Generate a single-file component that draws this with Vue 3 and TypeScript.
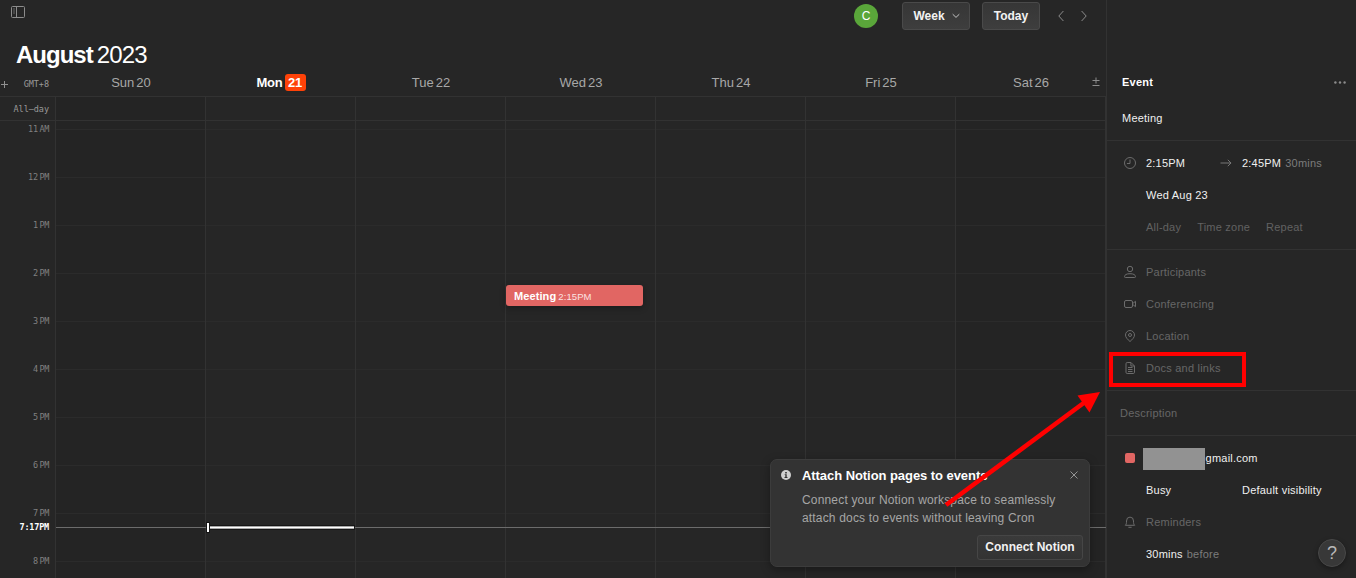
<script setup lang="ts">
interface Day { name: string; date: number; today?: boolean; weekend?: boolean }

const days: Day[] = [
  { name: 'Sun', date: 20, weekend: true },
  { name: 'Mon', date: 21, today: true },
  { name: 'Tue', date: 22 },
  { name: 'Wed', date: 23 },
  { name: 'Thu', date: 24 },
  { name: 'Fri', date: 25 },
  { name: 'Sat', date: 26, weekend: true },
]

const hours: [string, string][] = [
  ['11', 'AM'], ['12', 'PM'], ['1', 'PM'], ['2', 'PM'], ['3', 'PM'],
  ['4', 'PM'], ['5', 'PM'], ['6', 'PM'], ['7', 'PM'], ['8', 'PM'],
]
</script>

<template>
  <div class="app">
    <main class="calendar">
      <header class="toolbar">
        <svg class="panel-icon" width="14" height="12" viewBox="0 0 14 12" fill="none" stroke="#8c8c8c">
          <rect x=".5" y=".5" width="13" height="11" rx="1" />
          <path d="M5.5 .5V11.5" />
          <path d="M2 3h2M2 5h2M2 7h2" stroke="#666" />
        </svg>
        <div class="avatar">C</div>
        <button class="btn week"><span>Week</span>
          <svg width="8" height="6" viewBox="0 0 8 6" fill="none" stroke="#c4c4c4"><path d="M.7 1.2 4 4.4 7.3 1.2" /></svg>
        </button>
        <button class="btn today-btn">Today</button>
        <svg class="prev" width="6" height="12" viewBox="0 0 6 12" fill="none" stroke="#8c8c8c"><path d="M5.4 1 .8 6l4.6 5" /></svg>
        <svg class="next" width="6" height="12" viewBox="0 0 6 12" fill="none" stroke="#8c8c8c"><path d="M.6 1 5.2 6 .6 11" /></svg>
      </header>
      <h1 class="title"><b>August</b> <span>2023</span></h1>

      <div class="day-head">
        <div class="zone">
          <svg width="7" height="7" viewBox="0 0 7 7" stroke="#909090"><path d="M3.5 0v7M0 3.5h7" /></svg>
          <span>GMT+8</span>
        </div>
        <div v-for="d in days" :key="d.date" class="day-name" :class="{ current: d.today }">
          <span>{{ d.name }}</span><span class="date">{{ d.date }}</span>
        </div>
        <svg class="plus-minus" width="8" height="10" viewBox="0 0 8 10" stroke="#8c8c8c"><path d="M4 .5v6M.5 3.5h7M.5 8.5h7" /></svg>
      </div>

      <div class="all-day">
        <div class="gutter-label">All–day</div>
        <div v-for="d in days" :key="d.date" class="cell" :class="{ weekend: d.weekend }"></div>
      </div>

      <div class="grid">
        <div class="hours">
          <div v-for="[n, half] in hours" :key="n" class="hour"><span>{{ n }}</span><span class="half">{{ half }}</span></div>
        </div>
        <div v-for="d in days" :key="d.date" class="column" :class="{ weekend: d.weekend }">
          <i v-for="[n] in hours" :key="n" class="slot"></i>
          <div v-if="d.date === 23" class="meeting"><b>Meeting</b><span>2:15PM</span></div>
        </div>
        <div class="now-label">7:17PM</div>
        <div class="now-line"></div>
        <div class="now-today"></div>
        <div class="now-tick"></div>
      </div>
    </main>

    <aside class="panel">
      <section class="head">
        <div class="row event"><b>Event</b>
          <svg width="12" height="3" viewBox="0 0 12 3" fill="#8c8c8c"><circle cx="1.4" cy="1.5" r="1.2" /><circle cx="6" cy="1.5" r="1.2" /><circle cx="10.6" cy="1.5" r="1.2" /></svg>
        </div>
        <div class="row name">Meeting</div>
      </section>

      <section>
        <div class="row">
          <svg class="icon" viewBox="0 0 14 14"><circle cx="7" cy="7" r="5.5" /><path d="M7 3.5V7.500H3.9" /></svg>
          <span class="start">2:15PM</span>
          <svg class="arrow" width="12" height="8" viewBox="0 0 12 8" fill="none" stroke="#777"><path d="M.5 4h10.6M7.8 .8 11 4 7.8 7.2" /></svg>
          <span>2:45PM</span><span class="mid gap">30mins</span>
        </div>
        <div class="row indent">Wed Aug 23</div>
        <div class="row indent options"><span>All-day</span><span>Time zone</span><span>Repeat</span></div>
      </section>

      <section class="dim">
        <div class="row">
          <svg class="icon" viewBox="0 0 14 14"><circle cx="7" cy="4" r="2.7" /><path d="M1.5 11.7C1.5 9.8 3.5 8.7 7 8.7s5.5 1.1 5.5 3c0 .5-.3.8-.8.8H2.3c-.5 0-.8-.3-.8-.8Z" /></svg>
          <span>Participants</span>
        </div>
        <div class="row">
          <svg class="icon" viewBox="0 0 14 14"><rect x="1.5" y="3.5" width="8" height="7" rx="1.5" /><path d="M10 6.300 12.500 4.300v5.400L10 7.700" /></svg>
          <span>Conferencing</span>
        </div>
        <div class="row">
          <svg class="icon" viewBox="0 0 14 14"><path d="M7 12.5C4.5 10.3 2.5 8.4 2.5 6a4.5 4.5 0 0 1 9 0c0 2.4-2 4.3-4.500 6.500Z" /><circle cx="7" cy="6" r="1.5" /></svg>
          <span>Location</span>
        </div>
        <div class="row docs">
          <svg class="icon" viewBox="0 0 14 14"><path d="M8 1.500H4.200c-.8 0-1.200.4-1.200 1.200v8.600c0 .8.4 1.200 1.200 1.200h6.100c.8 0 1.200-.4 1.200-1.200V5ZM7.900 1.700V5h3.400M5 6.500h4.500M5 8.500h4.500M5 10.500h4.500" /></svg>
          <span>Docs and links</span>
        </div>
      </section>

      <section class="dim"><div class="row description">Description</div></section>

      <section class="last">
        <div class="row"><i class="swatch"></i><i class="redacted"></i><span class="mail">gmail.com</span></div>
        <div class="row indent"><span class="busy">Busy</span><span>Default visibility</span></div>
        <div class="row dim">
          <svg class="icon" viewBox="0 0 14 14"><path d="M2.300 10.300c1-.9 1.200-1.800 1.200-4.300a3.500 3.900 0 0 1 7 0c0 2.500.2 3.400 1.200 4.300Z" /><path d="M5.400 12.300h3.200" /></svg>
          <span>Reminders</span>
        </div>
        <div class="row indent"><span>30mins</span><span class="mid gap">before</span></div>
      </section>
    </aside>

    <div class="toast">
      <svg class="info" width="10" height="10" viewBox="0 0 10 10"><circle cx="5" cy="5" r="5" fill="#d0d0d0" /><path d="M4.200 2.100h1.600v1.300H4.200zM3.700 4.200h2v2.800h.8v.9H3.500V7h.8V5.100h-.6z" fill="#333" /></svg>
      <div class="toast-body">
        <b>Attach Notion pages to events</b>
        <p>Connect your Notion workspace to seamlessly<br />attach docs to events without leaving Cron</p>
        <button class="btn connect">Connect Notion</button>
      </div>
      <svg class="close" width="8" height="8" viewBox="0 0 8 8" stroke="#a0a0a0" stroke-width=".9"><path d="m.5.5 7 7m0-7-7 7" /></svg>
    </div>

    <div class="help">?</div>

    <svg class="pointer" width="160" height="120" viewBox="0 0 160 120">
      <path d="M6 115 145 12" stroke="#f00" stroke-width="4.600" />
      <path d="M160 2 137.500 5.500 149.500 22.500Z" fill="#f00" />
    </svg>
    <div class="highlight"></div>
  </div>
</template>

<style>
body { background: #262626; overflow: hidden; }
</style>

<style scoped>
* { box-sizing: border-box; }
.app {
  position: relative;
  display: flex;
  width: 1356px;
  height: 578px;
  overflow: hidden;
  background: #262626;
  color: #f0f0f0;
  font-family: "Liberation Sans", Arial, sans-serif;
}
svg { display: block; flex: none; }
.calendar { width: 1106px; flex: none; display: flex; flex-direction: column; }
.toolbar { height: 32px; display: flex; align-items: center; flex: none; }
.panel-icon { margin: 0 829px 8px 11px; }
.avatar {
  width: 24px; height: 24px; border-radius: 50%; background: #5aa63a; color: #fff;
  font-size: 12px; line-height: 25px; text-align: center; margin-right: 24px; flex: none;
}
.btn {
  font: bold 12px/26px "Liberation Sans", Arial, sans-serif;
  height: 28px; padding: 0; color: #f2f2f2; background: linear-gradient(#363636, #3e3e3e);
  border: 1px solid #4a4a4a; border-radius: 3px; flex: none; white-space: nowrap;
}
.week { width: 68px; display: flex; align-items: center; justify-content: center; gap: 7px; margin-right: 12px; padding-left: 1px; }
.today-btn { width: 58px; margin-right: 18px; }
.next { margin-left: 17px; }
.title {
  margin: 0; height: 38px; padding: 4px 0 0 16px; font-size: 24px; line-height: 38px;
  font-weight: 400; letter-spacing: -1px; color: #fff; flex: none;
}
.title span { margin-left: -1.5px; letter-spacing: -.9px; }
.day-head { height: 26px; display: flex; position: relative; flex: none; }
.zone { width: 55px; height: 26px; display: flex; align-items: center; padding: 2px 6px 0 1px; justify-content: space-between; }
.zone svg { margin-top: 1px; }
.zone, .gutter-label, .hour { font-family: "DejaVu Sans Mono", monospace; font-size: 8.500px; color: #999; letter-spacing: -.05px; }
.day-name {
  width: 150px; display: flex; align-items: center; justify-content: center; gap: 2px;
  padding: 0 0 1px 2px; font-size: 13px; letter-spacing: 0; color: #a8a8a8;
}
.current { color: #fff; font-weight: bold; letter-spacing: -.2px; }
.current .date { background: #ff4208; border-radius: 3px; height: 17px; width: 21px; line-height: 17px; text-align: center; }
.plus-minus { position: absolute; left: 1092px; top: 7px; }
.all-day { height: 24px; border-top: 1px solid #323232; display: flex; flex: none; }
.gutter-label { width: 55px; padding-right: 6px; text-align: right; line-height: 25px; }
.cell, .column { width: 150px; border-left: 1px solid #323232; flex: none; }
.cell:last-child, .column:nth-child(8) { width: 151px; border-right: 1px solid #323232; }
.weekend { background: #242424; }
.grid { height: 458px; display: flex; border-top: 1px solid #323232; position: relative; overflow: hidden; }
.hours { width: 55px; padding-right: 6px; flex: none; }
.hour { height: 48px; line-height: 17px; display: flex; justify-content: flex-end; color: #808080; }
.half { letter-spacing: -.4px; margin-left: 1.5px; }
.column { position: relative; padding-top: 8px; }
.slot { display: block; height: 48px; border-top: 1px solid #2b2b2b; }
.meeting {
  position: absolute; left: 0; top: 164px; width: 137px; height: 21px; border-radius: 3px;
  background: #e16663; color: #fff; font-size: 11px; line-height: 22px; padding-left: 8px;
  box-shadow: 0 2px 6px rgba(0, 0, 0, .3); white-space: nowrap; letter-spacing: .1px;
}
.meeting span { font-size: 9.500px; margin-left: 2px; color: #fbe3e2; }
.now-label {
  position: absolute; left: 0; top: 400px; width: 49px; text-align: right;
  font: bold 8.500px/13px "DejaVu Sans Mono", monospace; color: #fff; letter-spacing: -.2px;
}
.now-line { position: absolute; left: 56px; top: 406px; width: 1050px; height: 1px; background: #6c6c6c; }
.now-today { position: absolute; left: 208px; top: 405px; width: 146px; height: 3px; background: #fff; border: solid #a8a8a8; border-width: 1px 0; box-shadow: 0 0 0 1px #151515; }
.now-tick { position: absolute; left: 207px; top: 402px; width: 2px; height: 9px; background: #fff; box-shadow: 0 0 0 1px #151515; }

.panel { width: 250px; border-left: 1px solid #323232; font-size: 11px; letter-spacing: .22px; }
section { border-bottom: 1px solid #323232; padding: 6px 0; }
.row { height: 32px; display: flex; align-items: center; padding-left: 16px; white-space: nowrap; }
.head { height: 141px; padding: 66px 0 0; }
.event { justify-content: space-between; padding: 0 10px 0 15px; }
.event b { color: #fff; }
.name { margin-top: 4px; padding-left: 15px; }
.icon { width: 14px; height: 14px; margin-right: 9px; fill: none; stroke: #6c6c6c; }
.indent { padding-left: 39px; }
.start { width: 74px; }
.arrow { margin-right: 10px; }
.mid { color: #7c7c7c; }
.gap { margin-left: 4px; }
.options { gap: 16px; color: #626262; }
.dim { color: #666; }
.description { padding-left: 13px; }
.swatch { width: 10px; height: 10px; border-radius: 2px; background: #e16663; margin: 0 8px 0 2px; }
.redacted { width: 62px; height: 22px; margin-top: 2px; background: #929292; }
.mail { margin-left: .6px; }
.busy { width: 96px; }
.last { border: 0; }

.toast {
  position: absolute; left: 770px; top: 459px; width: 320px; height: 108px; background: #333;
  border: 1px solid #3c3c3c; border-radius: 7px; box-shadow: 0 3px 10px rgba(0, 0, 0, .35);
  display: flex; align-items: flex-start; padding: 7px 6px 0 10px;
}
.info { margin: 3px 11px 0 0; }
.toast-body { width: 281px; display: flex; flex-direction: column; white-space: nowrap; }
.toast-body b { font-size: 13px; line-height: 18px; color: #fff; letter-spacing: -.06px; }
.toast-body p { margin: 6px 0 0; font-size: 12px; line-height: 18px; color: #a6a6a6; letter-spacing: .17px; }
.connect { width: 106px; height: 25px; line-height: 23px; align-self: flex-end; margin-top: 8px; background: linear-gradient(#3a3a3a, #333); border-color: #464646; }
.close { position: absolute; right: 11px; top: 11px; }
.help {
  position: absolute; left: 1318px; top: 539px; width: 28px; height: 28px; border-radius: 50%;
  background: #383838; border: 1px solid #484848; color: #b8b8b8; font-size: 18px; line-height: 27px;
  text-align: center; box-shadow: 0 2px 5px rgba(0, 0, 0, .35);
}
.pointer { position: absolute; left: 940px; top: 390px; }
.highlight { position: absolute; left: 1109px; top: 352px; width: 137px; height: 35px; border: 4px solid #f00; }
</style>
